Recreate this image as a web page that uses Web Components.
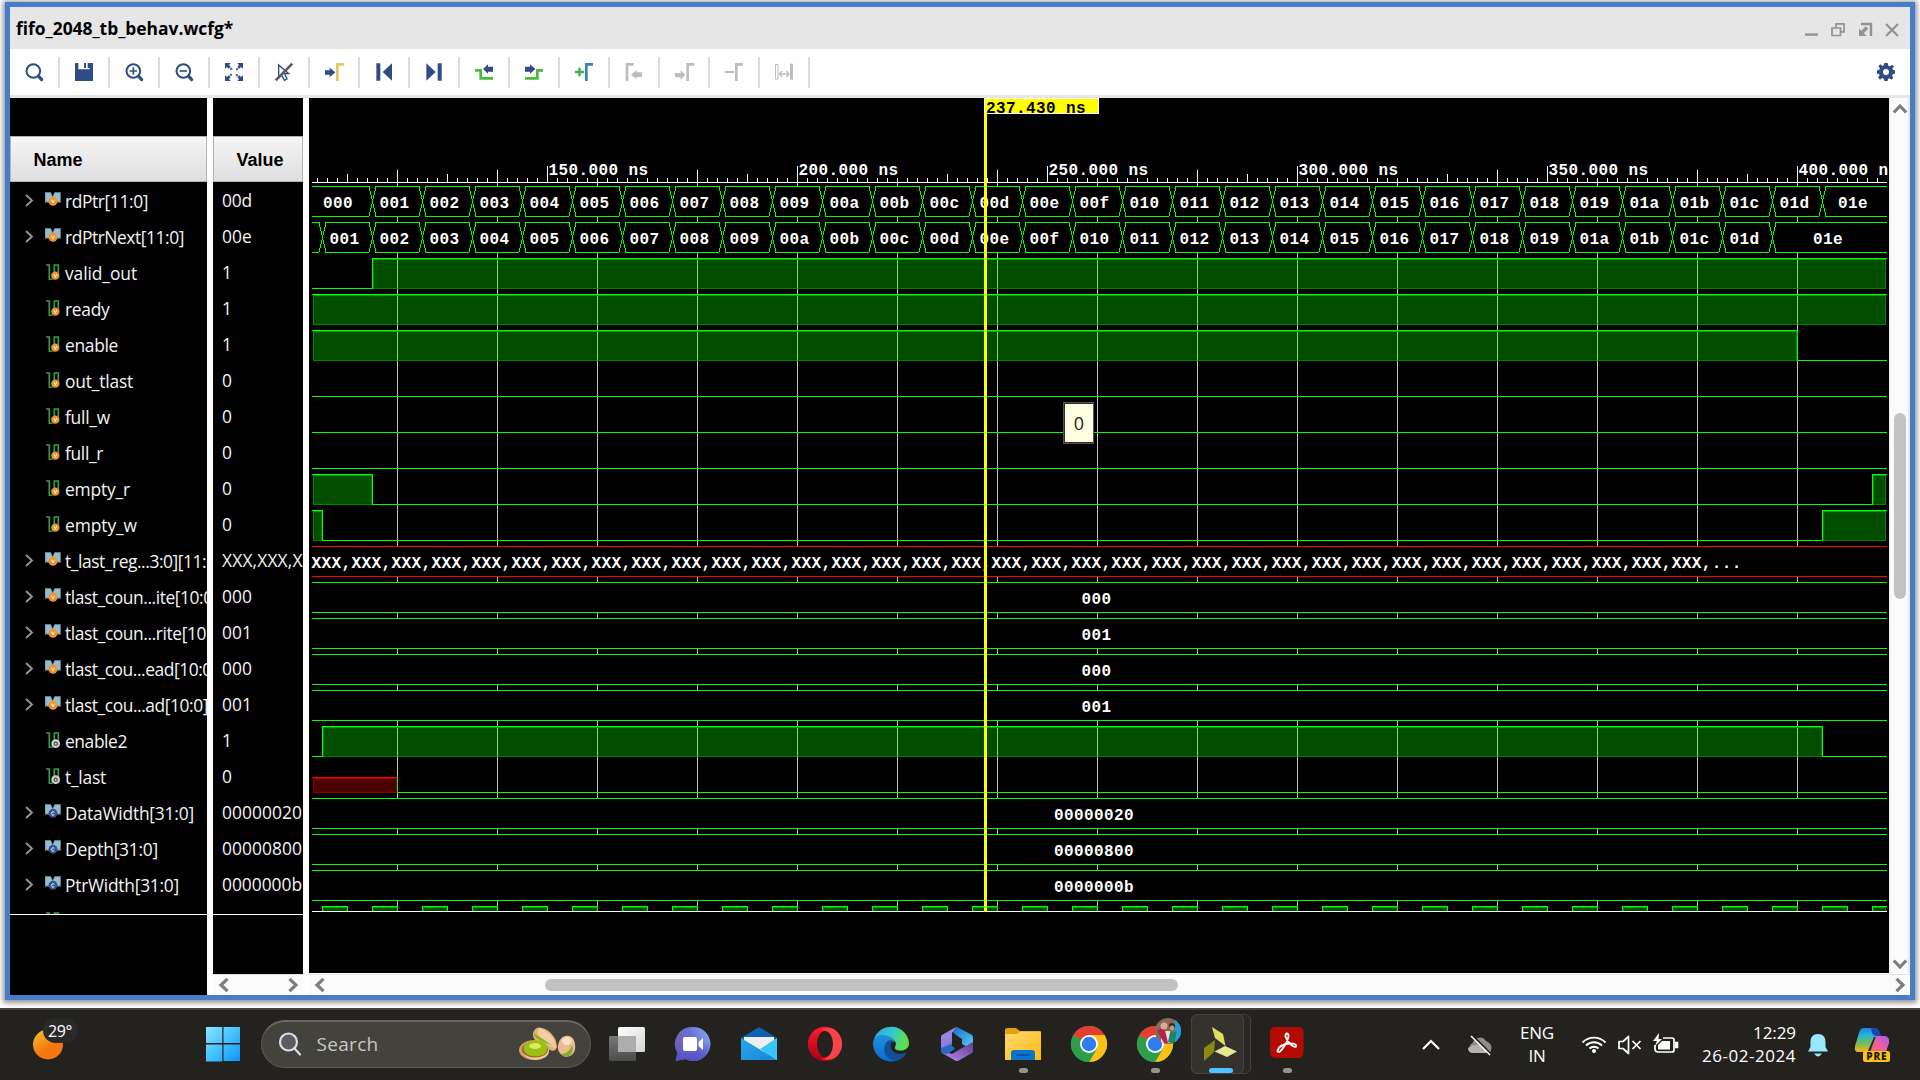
<!DOCTYPE html>
<html lang="en">
<head>
<meta charset="utf-8">
<title>fifo_2048_tb_behav.wcfg</title>
<style>
html,body{margin:0;padding:0;width:1920px;height:1080px;overflow:hidden;background:#fff}
</style>
</head>
<body>
<desk-top></desk-top>
<script>
function define(name, html, setup){
  const t=document.createElement('template'); t.innerHTML=html;
  customElements.define(name, class extends HTMLElement{
    constructor(){super();this.attachShadow({mode:'open'}).appendChild(t.content.cloneNode(true));}
    connectedCallback(){ if(setup) setup.call(this,this.shadowRoot); }
  });
}
const NAVY='#2f4d84', GREY='#bdbdbd';
const gamma=(x,c,h=54,r=20)=>`<path d="M${x} ${h}V4H${x+r}" fill="none" stroke="${c}" stroke-width="8"/>`;
const loupe=`<circle cx="25" cy="24" r="20.5" fill="none" stroke="${NAVY}" stroke-width="6"/><path d="M41 40L50 50" stroke="${NAVY}" stroke-width="9.5" stroke-linecap="round"/>`;
const corner=a=>`<g transform="rotate(${a} 27 27)"><path d="M0 0H17L12 6L17 11L11 17L6 12L0 17Z" fill="${NAVY}"/><rect x="15" y="14" width="7" height="7" fill="${NAVY}" opacity=".75"/></g>`;
const TOOLS={
 search:loupe,
 save:`<path d="M0 0H10V19H44V0H54V54H0Z M27 0H33V15H27Z M38 0H44V15H38Z" fill="${NAVY}"/>`,
 zoomin:loupe+`<path d="M14 24H36M25 13V35" stroke="${NAVY}" stroke-width="5"/>`,
 zoomout:loupe+`<path d="M14 24H36" stroke="${NAVY}" stroke-width="5"/>`,
 fit:corner(0)+corner(90)+corner(180)+corner(270),
 nocursor:`<path d="M11 6V44L20 36L28 52L36 48L29 32H41Z" fill="none" stroke="${NAVY}" stroke-width="4"/><path d="M2 52L52 2" stroke="#5c5c5c" stroke-width="8"/>`,
 goto:`<path d="M0 22H14V14L31 28L14 43V35H0Z" fill="${NAVY}"/>`+gamma(37,'#e3c766'),
 first:`<path d="M4 1H16V53H4Z M51 1V53L23 27Z" fill="${NAVY}"/>`,
 last:`<path d="M38 1H50V53H38Z M4 1V53L32 27Z" fill="${NAVY}"/>`,
 prev:`<path d="M0 22H17V46H54" fill="none" stroke="#4bb93d" stroke-width="8"/><path d="M24 18L39 4V11H54V26H39V32Z" fill="${NAVY}"/>`,
 next:`<path d="M0 46H37V22H54" fill="none" stroke="#4bb93d" stroke-width="8"/><path d="M31 18L15 4V11H0V26H15V32Z" fill="${NAVY}"/>`,
 add:`<path d="M0 27H27M13.5 14V40" stroke="#46ad4f" stroke-width="7"/>`+gamma(34,'#3681b8'),
 mleft:gamma(6,GREY)+`<path d="M18 35L35 21V28H51V42H35V49Z" fill="${GREY}"/>`,
 mright:gamma(38,GREY)+`<path d="M31 36L17 22V30H0V43H17V50Z" fill="${GREY}"/>`,
 del:`<path d="M0 27H27" stroke="${GREY}" stroke-width="6"/>`+gamma(34,GREY),
 span:`<path d="M1.5 4.5H9V48H1.5Z" fill="none" stroke="${GREY}" stroke-width="3"/><path d="M45 2H54V50H45Z" fill="${GREY}"/><path d="M13 33H42M21 24L13 33L21 42M34 24L42 33L34 42" fill="none" stroke="${GREY}" stroke-width="4"/>`,
 gear:`<path fill-rule="evenodd" fill="${NAVY}" d="M22 0H32L34 8L39 10L46 5L51 11L46 17L48 21L54 22V32L48 33L45 38L49 44L43 50L37 46L33 48L32 54H22L20 47L16 45L9 50L3 43L8 37L6 33L0 32V22L6 21L9 16L4 10L10 4L17 9L20 7Z M27 18A9 9 0 1 0 27 36A9 9 0 1 0 27 18Z"/>`
};

/* Text set to a fixed advance width by spreading its letters */
define('fit-text',`<style>:host{display:inline-block;white-space:pre}span{display:inline-block}</style><span><slot></slot></span>`,
function(r){
  const w=+this.getAttribute('w'); if(!w) return;
  const s=r.querySelector('span'), n=this.textContent.length;
  s.style.letterSpacing=((w-s.getBoundingClientRect().width)/n)+'px';
});

define('tool-button',`<style>:host{display:flex;width:48px;height:31px;align-items:center;justify-content:center;border-right:2px solid #dcdcdc}
:host([plain]){border:0}svg{width:18px;height:18px;overflow:visible;margin-top:0;margin-bottom:1px;margin-right:1px}:host([plain]) svg{margin-right:0}</style><svg viewBox="0 0 54 54"></svg>`,
function(r){r.querySelector('svg').innerHTML=TOOLS[this.getAttribute('icon')];});

define('tool-bar',`<style>:host{display:flex;height:46px;background:#fff;border-bottom:3px solid #e6e6e6;align-items:center}
i{flex:1}</style>
${['search','save','zoomin','zoomout','fit','nocursor','goto','first','last','prev','next','add','mleft','mright','del','span'].map(i=>`<tool-button icon="${i}"></tool-button>`).join('')}<i></i><tool-button plain icon="gear"></tool-button>`);

define('title-bar',`<style>:host{display:flex;height:42px;background:#e6e6e6;align-items:center;padding:0 10px 0 6px;justify-content:space-between;font:bold 17.4px/26px "Open Sans","Noto Sans",sans-serif;color:#000}
svg{width:96px;height:16px;margin-top:3px}fit-text{margin-top:-1px}</style>
<fit-text w="214"><slot></slot></fit-text>
<svg viewBox="0 0 96 16" fill="none" stroke="#939393" stroke-width="1.7"><path d="M1 12.6H14" stroke-width="2.4"/><path d="M28 6H36.500V13.500H28ZM32 6V1.800H40V9.800H36.500"/><path d="M57 2H67V14" stroke-width="2.4"/><path d="M63 5.500L58 10.500" stroke-width="3.400"/><path d="M55 6.500V14H62.500Z" fill="#939393" stroke="none"/><path d="M82 2L94 14M94 2L82 14" stroke-width="2.200"/></svg>`);

const busIcon=(fill,g)=>`<svg viewBox="0 0 48 48"><path d="M0 1H17L23 14L29 1H47V31H0Z" fill="#93bdd0" stroke="#5f6c70" stroke-width="2"/><path d="M0 29H12L17 23H31L35 29H47V31H0Z" fill="#5f6c70"/><circle cx="24" cy="28" r="13.500" fill="${fill}"/>${g}</svg>`;
const bitIcon=(c)=>`<svg viewBox="0 0 48 48"><path d="M3 3H13V46H23M28 30V3H40V28" fill="none" stroke="#3c9a4c" stroke-width="5"/>${c}</svg>`;
const vee=(x,y)=>`<path d="M${x-4} ${y-5}L${x} ${y+5}L${x+4} ${y-5}" fill="none" stroke="#fff" stroke-width="3"/>`;
const ICONS={
 bv:busIcon('#f1932a',vee(24,28)),
 bc:busIcon('#34558f',`<path d="M28 25A5 5 0 1 0 28 32" fill="none" stroke="#fff" stroke-width="3"/>`),
 v:bitIcon(`<circle cx="31" cy="35" r="12.500" fill="#f1932a"/>`+vee(31,35)),
 g:bitIcon(`<circle cx="32" cy="35" r="13" fill="#d0d0d0"/><circle cx="32" cy="35" r="6.500" fill="#444"/><circle cx="32" cy="35" r="3" fill="#ddd"/>`)
};
define('signal-name',`<style>:host{display:flex;height:36px;align-items:center;color:#f4f4f4;font:17.400px/36px "Open Sans","Noto Sans",sans-serif;white-space:nowrap}
.c{width:35px;flex:none;display:flex;padding-left:15px;box-sizing:border-box}.c svg{width:9px;height:13px;margin-top:-2px}
.i{width:20px;flex:none;display:flex}.i svg{width:16px;height:16px;margin-top:-2px}</style>
<div class="c"></div><div class="i"></div><fit-text><slot></slot></fit-text>`,
function(r){
  const k=this.getAttribute('icon'); r.querySelector('.i').innerHTML=ICONS[k];
  if(k[0]==='b') r.querySelector('.c').innerHTML='<svg viewBox="0 0 9 13"><path d="M1 1L7 6.500L1 12" fill="none" stroke="#9a9a9a" stroke-width="1.800"/></svg>';
});

const SIG=[['bv','rdPtr[11:0]',83,'00d'],['bv','rdPtrNext[11:0]',119,'00e'],['v','valid_out',72,'1'],['v','ready',44.500,'1'],['v','enable',53,'1'],['v','out_tlast',68,'0'],['v','full_w',45,'0'],['v','full_r',38,'0'],['v','empty_r',65,'0'],['v','empty_w',72,'0'],['bv','t_last_reg...3:0][11:0]',156,'XXX,XXX,XXX'],['bv','tlast_coun...ite[10:0]',153,'000'],['bv','tlast_coun...rite[10:0]',160,'001'],['bv','tlast_cou...ead[10:0]',152,'000'],['bv','tlast_cou...ad[10:0]',143,'001'],['g','enable2',62,'1'],['g','t_last',41,'0'],['bc','DataWidth[31:0]',129,'00000020'],['bc','Depth[31:0]',93,'00000800'],['bc','PtrWidth[31:0]',114,'0000000b']];

define('col-head',`<style>:host{display:flex;height:46px;box-sizing:border-box;border:1px solid #b4b4b4;background:linear-gradient(#f6f6f6,#dedee0);align-items:center;font:bold 18px/20px "Liberation Sans",Arial,sans-serif;color:#000;padding-left:22.500px;padding-top:2px}</style><slot></slot>`);
define('arrow-mark',`<style>:host{display:block;width:16px;height:16px}svg{display:block;width:16px;height:16px}</style><svg viewBox="0 0 16 16"><path d="M11.500 1.800L5 8L11.500 14.200" fill="none" stroke="#7d7d7d" stroke-width="3.200"/></svg>`,
function(r){r.querySelector('path').setAttribute('transform',`rotate(${this.getAttribute('turn')||0} 8 8)`);});
define('h-scroll',`<style>:host{display:flex;height:20px;background:#fbfbfb;border-top:1px solid #e4e4e4;align-items:center;justify-content:space-between;box-sizing:content-box;padding:0 2px 0 3px}
.t{flex:1;display:flex}b{display:block;height:12px;border-radius:6px;background:#c2c2c2}</style>
<arrow-mark></arrow-mark><div class="t"><b></b></div><arrow-mark turn="180"></arrow-mark>`,
function(r){const b=r.querySelector('b');if(this.hasAttribute('size')){b.style.width=this.getAttribute('size')+'px';b.style.marginLeft=this.getAttribute('start')+'px';}});
define('v-scroll',`<style>:host{display:flex;flex-direction:column;width:21px;background:#fbfbfb;align-items:center;box-sizing:border-box;border-left:1px solid #e8e8e8;border-right:2px solid #e9e9e9;padding:3px 0 1px 1px}
.t{flex:1;}b{display:block;width:12px;height:186px;border-radius:6px;background:#c2c2c2;margin-top:296px}</style>
<arrow-mark turn="90"></arrow-mark><div class="t"><b></b></div><arrow-mark turn="-90"></arrow-mark>`);

define('name-pane',`<style>:host{display:flex;flex-direction:column;width:197px;background:#000;overflow:hidden}
.top{height:38px;flex:none}.rows{height:732px;overflow:hidden;border-bottom:1px solid #fff;flex:none;display:flex;flex-direction:column;padding-top:1px;box-sizing:border-box;height:733px}signal-name{flex:none}</style>
<div class="top"></div><col-head>Name</col-head><div class="rows">${SIG.map(s=>`<signal-name icon="${s[0]}"></signal-name>`).join('')}<signal-name icon="v"></signal-name></div>`,
function(r){r.querySelectorAll('signal-name').forEach((e,i)=>{ if(SIG[i]){const f=e.shadowRoot.querySelector('fit-text');f.setAttribute('w',SIG[i][2]);e.textContent=SIG[i][1];
  const s=f.shadowRoot.querySelector('span');s.style.letterSpacing='0px';s.style.letterSpacing=((SIG[i][2]-s.getBoundingClientRect().width)/SIG[i][1].length)+'px';}});});
define('value-pane',`<style>:host{display:flex;flex-direction:column;width:90px;background:#000;overflow:hidden}
.top{height:38px;flex:none}.rows{height:732px;overflow:hidden;border-bottom:1px solid #fff;flex:none;color:#f4f4f4;font:17.400px/36px "Open Sans","Noto Sans",sans-serif}
.rows div{height:36px;padding-left:9px;white-space:nowrap}.sp{flex:1}</style>
<div class="top"></div><col-head>Value</col-head><div class="rows">${SIG.map(s=>`<div><fit-text w="${s[3][0]==='X'?101:s[3].length*10}">${s[3]}</fit-text></div>`).join('')}</div><div class="sp"></div><h-scroll></h-scroll>`);

define('wave-view',`<style>:host{display:block;width:1580px;height:875px;background:#000}svg{display:block}
text{font:bold 16px "Liberation Mono","Courier New",monospace;letter-spacing:.4px;fill:#fff;white-space:pre}
.tip{font:18px "Open Sans","Noto Sans",sans-serif;fill:#222;letter-spacing:0}</style>
<svg width="1580" height="875" viewBox="309 98 1580 875"></svg>`,
function(r){
  const L=312,R=1887,G='#00ff00'; let o='';
  const rect=(x,y,w,h,f)=>{o+=`<rect x="${x}" y="${y}" width="${w}" height="${h}" fill="${f}"/>`;};
  const hl=(x1,x2,y,c=G)=>rect(x1,y,x2-x1,1,c);
  const text=(x,y,s,c)=>{o+=`<text x="${x}" y="${y}" xml:space="preserve"${c||''}>${s}</text>`;};
  o+='<g shape-rendering="crispEdges">';
  for(let x=397;x<R;x+=100) rect(x,183,1,728,'#c0c0c0');
  hl(L,R,182,'#fff');
  for(let x=317;x<R;x+=10){
    const ns=Math.round((x-547)/5)+150; let y=178;
    if(ns%50===0) y=166; else { const covered=ns>150&&ns%50<=20; if(ns%20===0&&!covered) y=170; else if(ns%10===0&&!covered) y=174; }
    rect(x,y,1,182-y,'#fff');
  }
  const fill=(a,b,y,h,rgb)=>{
    rect(a+1,y+1,b-a-1,h,`rgba(${rgb},.3)`);
    const d=rgb[0]==='0'?'rgba(0,170,0,.6)':'rgba(190,0,0,.6)';
    rect(a+1,y+1,b-a-1,1,rgb[0]==='0'?'#00a000':'#a00000'); rect(a+1,y+h,b-a-1,1,d); rect(a+1,y+2,1,h-2,d); rect(b-1,y+2,1,h-2,d);
  };
  /* segs: list of [start, level] pairs */
  const bit=(i,segs)=>{
    const hi=186+36*i, lo=hi+30;
    segs.forEach(([x,v],k)=>{
      const e=k<segs.length-1?segs[k+1][0]:R;
      if(v) fill(x,k<segs.length-1?e:1886,hi,30,'0,255,0');
      hl(x,e,v?hi:lo); if(k) rect(x,hi,1,31,G);
    });
  };
  const bus=(i,edges,vals,c=G)=>{
    const hi=186+36*i, lo=hi+30; rect(L,hi,R-L,31,'#000');
    let s=L;
    edges.concat([null]).forEach(e=>{
      const end=e===null?R:e-3; hl(s,end,hi,c); hl(s,end,lo,c);
      if(e!==null){ o+=`<path d="M${e-3} ${hi+.5}L${e+.5} ${hi+15.5}L${e+4} ${lo+.5}M${e-3} ${lo+.5}L${e+.5} ${hi+15.5}L${e+4} ${hi+.5}" fill="none" stroke="${c}"/>`; s=e+4; }
    });
    const b=[309,...edges,1889];
    vals.forEach((v,k)=>{ if(v) text((b[k]+b[k+1])/2-5.5*v.length-.9,hi+22,v); });
  };
  const hex=n=>n.toString(16).padStart(3,'0');
  const seq=(x)=>Array.from({length:30},(_,k)=>x+50*k);
  bus(0,seq(372),Array.from({length:31},(_,k)=>hex(k)));
  bus(1,seq(322),['',...Array.from({length:30},(_,k)=>hex(k+1))]);
  bit(2,[[L,0],[372,1]]); bit(3,[[L,1]]); bit(4,[[L,1],[1797,0]]);
  bit(5,[[L,0]]); bit(6,[[L,0]]); bit(7,[[L,0]]);
  bit(8,[[L,1],[372,0],[1872,1]]); bit(9,[[L,1],[322,0],[1822,1]]);
  bus(10,[],[],'#ff0000'); text(311.5,568,'XXX,'.repeat(35)+'...');
  ['000','001','000','001'].forEach((v,k)=>bus(11+k,[],[v]));
  bit(15,[[L,0],[322,1],[1822,0]]);
  fill(L,397,777,15,'255,0,0'); hl(L,397,777,'#ff0000'); rect(397,777,1,16,G); hl(397,R,792);
  ['00000020','00000800','0000000b'].forEach((v,k)=>bus(17+k,[],[v]));
  for(let x=322;x<R;x+=50){ const e=Math.min(x+25,1886); rect(x+1,907,e-x-1,4,'rgba(0,255,0,.3)'); rect(x+1,907,e-x-1,1,'#00a000'); rect(x+1,908,1,3,'#008000'); rect(e-1,908,1,3,'#008000');
    hl(x,Math.min(x+26,R),906); rect(x,906,1,5,G); if(x+25<R) rect(x+25,906,1,5,G); }
  hl(L,R,911,'#fff');
  for(let x=547,n=150;n<=400;x+=250,n+=50) text(x+1.5,175,n+'.000 ns');
  rect(984,98,115,16,'#fff'); rect(985,99,113,14,'#ff0'); rect(984,113,3,799,'#ff0'); rect(985,99,2,15,'#ff0');
  text(986,112.5,'237.430 ns',' style="fill:#000"');
  rect(1063,402,31,42,'#555'); rect(1064,403,29,40,'#2b2b2b'); rect(1065,404,28,38,'#ffffe1');
  o+='</g>'; o+=`<text class="tip" x="1079" y="430" text-anchor="middle">0</text>`;
  r.querySelector('svg').innerHTML=o;
});

define('wave-window',`<style>:host{display:flex;flex-direction:column;margin:2px 5px 0;width:1900px;height:988px;border:5px solid #4a7ccc;background:#fff;box-shadow:0 1px 5px 2px rgba(0,0,0,.42)}
main{display:flex;gap:6px;height:897px}.w{display:flex;flex-direction:column}.r{display:flex}h-scroll{margin-top:1px}</style>
<title-bar>fifo_2048_tb_behav.wcfg*</title-bar><tool-bar></tool-bar>
<main><name-pane></name-pane><value-pane></value-pane><div class="w"><div class="r"><wave-view></wave-view><v-scroll></v-scroll></div><h-scroll start="217" size="633"></h-scroll></div></main>`);

const CHROME=`<circle cx="18" cy="18" r="18" fill="#2f9e4b"/><path d="M18 18L2.400 9A18 18 0 0 1 33.600 9Z" fill="#e33e32"/><path d="M18 9H33.600A18 18 0 0 1 18 36L25.800 22.500Z" fill="#fdc116"/><path d="M2.400 9L10.200 22.500L18 27L25 24L18 36A18 18 0 0 1 2.400 9" fill="#2f9e4b"/><circle cx="18" cy="18" r="9" fill="#fff"/><circle cx="18" cy="18" r="7.200" fill="#2f7bf0"/>`;
const APPS={
 win:`<defs><linearGradient id="w" x1="0" y1="0" x2="1" y2="1"><stop offset="0" stop-color="#8be4ff"/><stop offset=".5" stop-color="#45c2fd"/><stop offset="1" stop-color="#0c93fb"/></linearGradient></defs><path d="M1.500 1H17.300V17H1V1.500ZM18.500 1H35V17H18.500ZM1 18.500H17.300V35.500H1ZM18.500 18.500H35V35H18.500Z" fill="url(#w)"/>`,
 task:`<defs><linearGradient id="t" x1="0" y1="0" x2="1" y2="1"><stop offset="0" stop-color="#fff"/><stop offset="1" stop-color="#d5d5d5"/></linearGradient><linearGradient id="u" x1="0" y1="0" x2="0" y2="1"><stop offset="0" stop-color="#777"/><stop offset="1" stop-color="#4b4b4b"/></linearGradient></defs><rect x="0" y="10" width="27" height="25" rx="1.500" fill="url(#u)"/><rect x="9" y="1" width="27" height="25" rx="1.500" fill="url(#t)"/><rect x="9" y="10" width="18" height="16" fill="#adadad"/>`,
 teams:`<defs><linearGradient id="e" x1="0" y1=".6" x2="1" y2=".2"><stop offset="0" stop-color="#7a5bb5"/><stop offset=".5" stop-color="#6a70d0"/><stop offset="1" stop-color="#82a6f0"/></linearGradient><linearGradient id="f" x1="0" y1="0" x2="0" y2="1"><stop offset=".4" stop-color="#5059c9" stop-opacity="0"/><stop offset="1" stop-color="#544fc6"/></linearGradient></defs><path d="M17.500 1A17 17 0 1 1 10.500 33L.500 35L2.500 27A17 17 0 0 1 17.500 1Z" fill="url(#e)"/><path d="M17.500 1A17 17 0 1 1 10.500 33L.500 35L2.500 27A17 17 0 0 1 17.500 1Z" fill="url(#f)"/><rect x="8" y="11" width="14" height="14" rx="2" fill="#fff"/><path d="M23.500 16L28 12V24L23.500 20Z" fill="#fff"/>`,
 mail:`<defs><linearGradient id="m" x1="0" y1="0" x2="1" y2="1"><stop offset="0" stop-color="#2aa9ea"/><stop offset="1" stop-color="#1687d8"/></linearGradient></defs><path d="M0 12L18 1L36 12V20H0Z" fill="#0b62b3"/><path d="M3 11H33V26H3Z" fill="#efeeee"/><path d="M36 12V34H14Z" fill="#3bc4f7"/><path d="M0 12L36 34H0Z" fill="url(#m)"/><path d="M36 12L19 23L36 34Z" fill="#39c5f5"/>`,
 opera:`<defs><linearGradient id="o" x1="0" y1="0" x2="0" y2="1"><stop offset="0" stop-color="#ff1b2d"/><stop offset="1" stop-color="#a70014"/></linearGradient></defs><ellipse cx="18" cy="18" rx="17.200" ry="17.200" fill="url(#o)"/><path d="M13 3.500C20 1 27 1 31 7A17 17 0 0 1 31 29C27 34 20 35 13 32.500C21 34 25 27 25 18S20 3 13 3.500Z" fill="#f9434b"/><ellipse cx="18" cy="18" rx="8" ry="13" fill="#24221e"/>`,
 edge:`<defs><linearGradient id="g" x1="0" y1="0" x2="1" y2=".3"><stop offset="0" stop-color="#2aa8e0"/><stop offset=".5" stop-color="#33c3d8"/><stop offset="1" stop-color="#5fe04a"/></linearGradient><linearGradient id="h" x1="0" y1="0" x2="0" y2="1"><stop offset="0" stop-color="#2190dc"/><stop offset="1" stop-color="#0a6cce"/></linearGradient></defs><path d="M1 13A18 18 0 0 1 36 17C36 23 31 25 26 24.500C22 24 21 22 22.500 20C24 15 20 12 15 12Z" fill="url(#g)"/><path d="M0 18C0 8 10 8 15 10C21 12 23 16 22.500 19C21 14 13 15 12 22C12 29 19 34 27 33A18 18 0 0 1 0 18Z" fill="url(#h)"/><path d="M12 19C9 26 14 36 25 34.500C29 33 32 30 33.500 26.500C28 29 21 28.500 18.500 23C17.500 20 18 16 20 14.500C16 13.500 13 15.500 12 19Z" fill="#114f9d"/><path d="M18 22C17 18 19 14 22 16C23.500 18 21.500 20 21.500 22C22 24 24 25 26 24.800C22 26 19 25 18 22Z" fill="#24221e"/>`,
 m365:`<defs><linearGradient id="i" x1="0" y1="0" x2="1" y2="1"><stop offset="0" stop-color="#1a65c8"/><stop offset="1" stop-color="#57d4f8"/></linearGradient><linearGradient id="j" x1="0" y1="0" x2=".3" y2="1"><stop offset="0" stop-color="#a88be0"/><stop offset=".7" stop-color="#8d80da"/><stop offset="1" stop-color="#2463c2"/></linearGradient><linearGradient id="k" x1="0" y1="1" x2="1" y2="0"><stop offset="0" stop-color="#b58cf5"/><stop offset="1" stop-color="#633c8c"/></linearGradient></defs><path d="M12 4L18 1L33 9Q34 10 34 12V24L23 18V13L17 9Z" fill="url(#i)"/><path d="M2 24L13 28L23 22L34 16V25Q34 26 33 27L19 35H17L3 27Z" fill="url(#k)"/><path d="M17 1L13 7V20L3 27Q2 26 2 24V11Q2 10 3 9Z" fill="url(#j)"/><path d="M2 22L13 18L16 23L8 28Q2 28 2 24Z" fill="#2767c6"/><path d="M13 15L18 12L23 15V20L18 23L13 20Z" fill="#24221e"/>`,
 files:`<defs><linearGradient id="q" x1="0" y1="0" x2="1" y2="1"><stop offset="0" stop-color="#ffd970"/><stop offset="1" stop-color="#fdb913"/></linearGradient></defs><path d="M0 4Q0 2 2 2H11L15 5H34Q36 5 36 8V15H0Z" fill="#e2a30c"/><path d="M0 8H12L16 5.500H36V34H0Z" fill="url(#q)"/><path d="M6 34V27Q6 24 9 24H27Q30 24 30 27V34Z" fill="#0a75cb"/><path d="M11 29H25" stroke="#064b91" stroke-width="1.400"/>`,
 chrome:CHROME,
 chrome2:CHROME+`<defs><clipPath id="cc"><circle cx="31" cy="5" r="13"/></clipPath></defs><g clip-path="url(#cc)"><rect x="17" y="-9" width="28" height="28" fill="#8a6955"/><rect x="38" y="-6" width="8" height="24" fill="#1ba3dc"/><rect x="24" y="5" width="9" height="12" fill="#e8dfe2"/><path d="M20 5L27 0L31 17H27Z" fill="#b0264c"/><path d="M33 7L40 5L37 18L31 16Z" fill="#198768"/><circle cx="27" cy="0" r="3.500" fill="#d5ad96"/><circle cx="35" cy="0" r="3" fill="#3c2c25"/><circle cx="35" cy="2" r="2.400" fill="#c79878"/></g>`,
 vivado:`<path d="M9 1L20 8L22.500 20L12 12Z" fill="#dddf5c"/><path d="M1 22L12 14L11 26L1 35Z" fill="#8b8a10"/><path d="M11.500 25.500L22 20L34 25.500L24 31Z" fill="#e6e796"/>`,
 pdf:`<rect x="1" y="1" width="33.500" height="31" rx="5" fill="#b30b00"/><path d="M8.500 24.500C10 19.500 16 18 20 17.500C25 17 28 18.500 27 20.500C25 22.500 18 16 16.500 10.500C16 6.500 20 6.500 19.500 10.500C19 15 14 23 11 25.500C9 26.500 8.200 25.500 8.500 24.500Z" fill="none" stroke="#fff" stroke-width="1.800"/>`
};
define('task-item',`<style>:host{display:flex;width:66px;height:70px;align-items:center;justify-content:center;position:relative}
svg{width:36px;height:36px;overflow:visible;margin-top:-2px;z-index:1}
.dot{position:absolute;bottom:7px;left:29px;width:9px;height:5px;border-radius:3px;background:#96938f;display:none;z-index:2}
:host([run]) .dot{display:block}:host([active]) .dot{display:block;background:#4cc2ff;width:24px;left:21px}
.bg{position:absolute;display:none;box-sizing:border-box;border:1px solid #45423f;border-radius:6px;top:4px;height:60px}
:host([active]) .bg{display:block}.b1{left:3px;width:60px;background:#2a2825}.b2{left:3px;width:53px;background:#35322e}</style>
<div class="bg b1"></div><div class="bg b2"></div><svg viewBox="0 0 36 36"></svg><div class="dot"></div>`,
function(r){r.querySelector('svg').innerHTML=APPS[this.getAttribute('app')];});

define('weather-chip',`<style>:host{display:block;width:48px;height:44px;position:relative;margin:2px 0 0 31px}svg{display:block}
span{position:absolute;left:17px;top:3px;font:16px/20px "Open Sans","Noto Sans",sans-serif;color:#fff}</style>
<svg width="48" height="44" viewBox="0 0 48 44"><defs><linearGradient id="a" x1="0" y1="0" x2=".6" y2="1"><stop offset="0" stop-color="#f3c432"/><stop offset=".7" stop-color="#f4770f"/></linearGradient></defs><circle cx="17" cy="26.500" r="15" fill="url(#a)"/><rect x="12" y="0" width="35" height="25" rx="12.500" fill="#2b2a2b"/></svg><span><fit-text w="24">29°</fit-text></span>`);

define('search-pill',`<style>:host{display:flex;box-sizing:border-box;width:330px;height:48px;border:1px solid #5b5855;border-top:2px solid #6b6764;border-radius:24px;background:#43423d;align-items:center;color:#c9c7c4;font:19px/24px "Open Sans","Noto Sans",sans-serif;padding:0 13px 2px 16px;margin:0 4px 0 5px}
fit-text{margin-left:15px;flex:1}</style>
<svg width="24" height="24" viewBox="0 0 24 24" fill="none" stroke="#dce0e6" stroke-width="2.200" stroke-linecap="round"><circle cx="10.500" cy="10" r="8.500" fill="#5a5c5e"/><path d="M17 17L22 22.500"/></svg><fit-text w="62">Search</fit-text>
<svg width="58" height="35" viewBox="0 0 58 35"><path d="M14 9C14 4 18 0 23 2C31 4 38 12 38 21C36 27 31 25 27 21C22 18 14 15 14 9Z" fill="#e6b182"/><path d="M20 2C30 5 36 12 37 22L27 19C21 14 17 8 20 2Z" fill="#f2cda2"/><path d="M15 7L34 20L22 15C17 12 14 10 15 7Z" fill="#86b51f"/><ellipse cx="15" cy="24" rx="15" ry="10" fill="#d8996c"/><ellipse cx="17" cy="25" rx="13" ry="9" fill="#f0c398"/><ellipse cx="16" cy="23.500" rx="13" ry="8" fill="#93602f"/><ellipse cx="16.500" cy="22.500" rx="12" ry="8" fill="#9cbf14"/><ellipse cx="16" cy="20" rx="6" ry="3" fill="#d9ec5a"/><path d="M40 16C43 8 52 8 55 14C58 22 56 31 46 31C40 28 37 23 40 16Z" fill="#e9bb90"/><ellipse cx="48" cy="15" rx="5" ry="4" fill="#fadfc0"/><path d="M42 28C47 28 51 25 53 19C55 25 52 31 46 31Z" fill="#86a822"/></svg>`);

define('sys-tray',`<style>:host{display:flex;align-items:center;height:70px;color:#fff;font:17px/23px "Open Sans","Noto Sans",sans-serif}
div{display:flex;flex-direction:column}.l{align-items:center;width:36px;margin-left:26px;margin-top:-3px}.d{align-items:flex-end;width:95px;margin-left:22px;margin-top:-3px}svg{flex:none;overflow:visible}
.p{font:800 10px/11px "Open Sans",sans-serif;fill:#221d00;letter-spacing:.8px}</style>
<svg style="margin-top:-1px" width="18" height="12" viewBox="0 0 18 12" fill="none" stroke="#fff" stroke-width="2.200"><path d="M1 10L9 2L17 10"/></svg>
<svg style="margin-left:27px" width="26" height="20" viewBox="0 0 26 20"><path d="M6 18A5.500 5.500 0 0 1 5.500 8A7.500 7.500 0 0 1 19 6Q25 9 24.500 13Q24 18 19 18Z" fill="#8e8c8a"/><path d="M1 13Q12 5 24 17Q22 18 19 18H6Q1 18 1 13" fill="#b3b2b1"/><path d="M5.500 .500L23.500 18.500" stroke="#24221e" stroke-width="1.800"/><path d="M4 1L23 20" stroke="#fff" stroke-width="1.600"/></svg>
<div class="l"><fit-text w="34">ENG</fit-text><fit-text w="17">IN</fit-text></div>
<svg style="margin:-2px 0 0 26px" width="26" height="20" viewBox="0 0 26 20" fill="none" stroke="#fff" stroke-width="1.900"><path d="M1.500 8.500A16 16 0 0 1 24.500 8.500M5 11.500A11.500 11.500 0 0 1 21 11.500M8.500 14.500A6.500 6.500 0 0 1 17.500 14.500"/><circle cx="13" cy="17" r="2" fill="#fff" stroke="none"/></svg>
<svg style="margin:-1px 0 0 11px" width="24" height="20" viewBox="0 0 24 20" fill="none" stroke="#fff" stroke-width="1.700"><path d="M1 6.500H5L10.500 1.500V18.500L5 13.500H1Z" stroke-linejoin="round"/><path d="M14.500 6L22.500 14M22.500 6L14.500 14"/></svg>
<svg style="margin:-3px 0 0 11px" width="26" height="22" viewBox="0 0 26 22" fill="none" stroke="#fff" stroke-width="1.700"><path d="M10 5H19Q21 5 21 7V17Q21 19 19 19H5Q2 19 2 16V12"/><path d="M9 8H17V16.500H5V12Z" fill="#fff" stroke="none"/><path d="M22 9.500H24.500V14.500H22" fill="#fff"/><path d="M6 0L0 8H4L2 13L9 6H5.500Z" fill="#fff" stroke="none"/></svg>
<div class="d"><fit-text w="43">12:29</fit-text><fit-text w="94">26-02-2024</fit-text></div>
<svg style="margin-left:12px" width="20" height="24" viewBox="0 0 20 24" fill="#97e8ff"><path d="M10 1C15 1 17.500 4 17.500 9V14L20 18.500H0L2.500 14V9C2.500 4 5 1 10 1ZM6 20.500H14Q12 23.500 10 23.500T6 20.500Z"/></svg>
<svg style="margin-left:26px" width="36" height="36" viewBox="0 0 36 36"><defs><linearGradient id="x" x1="0" y1="0" x2="0" y2="1"><stop offset="0" stop-color="#1d7fe8"/><stop offset=".3" stop-color="#25b4d8"/><stop offset=".65" stop-color="#79be50"/><stop offset="1" stop-color="#ffb422"/></linearGradient><linearGradient id="y" x1="1" y1="0" x2="0" y2="1"><stop offset="0" stop-color="#a85bf3"/><stop offset=".5" stop-color="#e860a8"/><stop offset="1" stop-color="#f9695c"/></linearGradient></defs><path d="M10 1H21Q24 1 26 9L20 10L14 24Q13 26 9 25H4Q0 25 1 19L5 6Q6 1 10 1Z" fill="url(#x)"/><path d="M17 1H22Q25 2 27 9H22Q18 9 17 1Z" fill="#1747b8"/><path d="M22 9H31Q36 10 35 16L32 25H16Z" fill="url(#y)"/><rect x="9" y="24" width="27" height="11" rx="2.500" fill="#ffc40c"/><text class="p" x="12.300" y="33.200">PRE</text></svg>`);

define('task-bar',`<style>:host{display:flex;box-sizing:border-box;width:1920px;height:72px;border-top:2px solid #454340;background:#24221e;align-items:center}
.a{display:flex;align-items:center;margin-left:110.500px;}.s{display:flex;align-items:center;height:70px;padding-bottom:2px;box-sizing:border-box}weather-chip{margin-top:-10px}
.a task-item:nth-child(n+3){margin-left:-.5px;margin-right:.5px}
sys-tray{margin-left:auto;margin-right:30px}</style>
<weather-chip></weather-chip>
<div class="a"><task-item app="win"></task-item><div class="s"><search-pill></search-pill></div><task-item app="task"></task-item><task-item app="teams"></task-item><task-item app="mail"></task-item><task-item app="opera"></task-item><task-item app="edge"></task-item><task-item app="m365"></task-item><task-item app="files" run></task-item><task-item app="chrome"></task-item><task-item app="chrome2" run></task-item><task-item app="vivado" active></task-item><task-item app="pdf" run></task-item></div>
<sys-tray></sys-tray>`);

define('desk-top',`<style>:host{display:flex;flex-direction:column;width:1920px;height:1080px;background:#fff;overflow:hidden;justify-content:space-between}task-bar{position:relative}</style><wave-window></wave-window><task-bar></task-bar>`);
</script>
</body>
</html>
